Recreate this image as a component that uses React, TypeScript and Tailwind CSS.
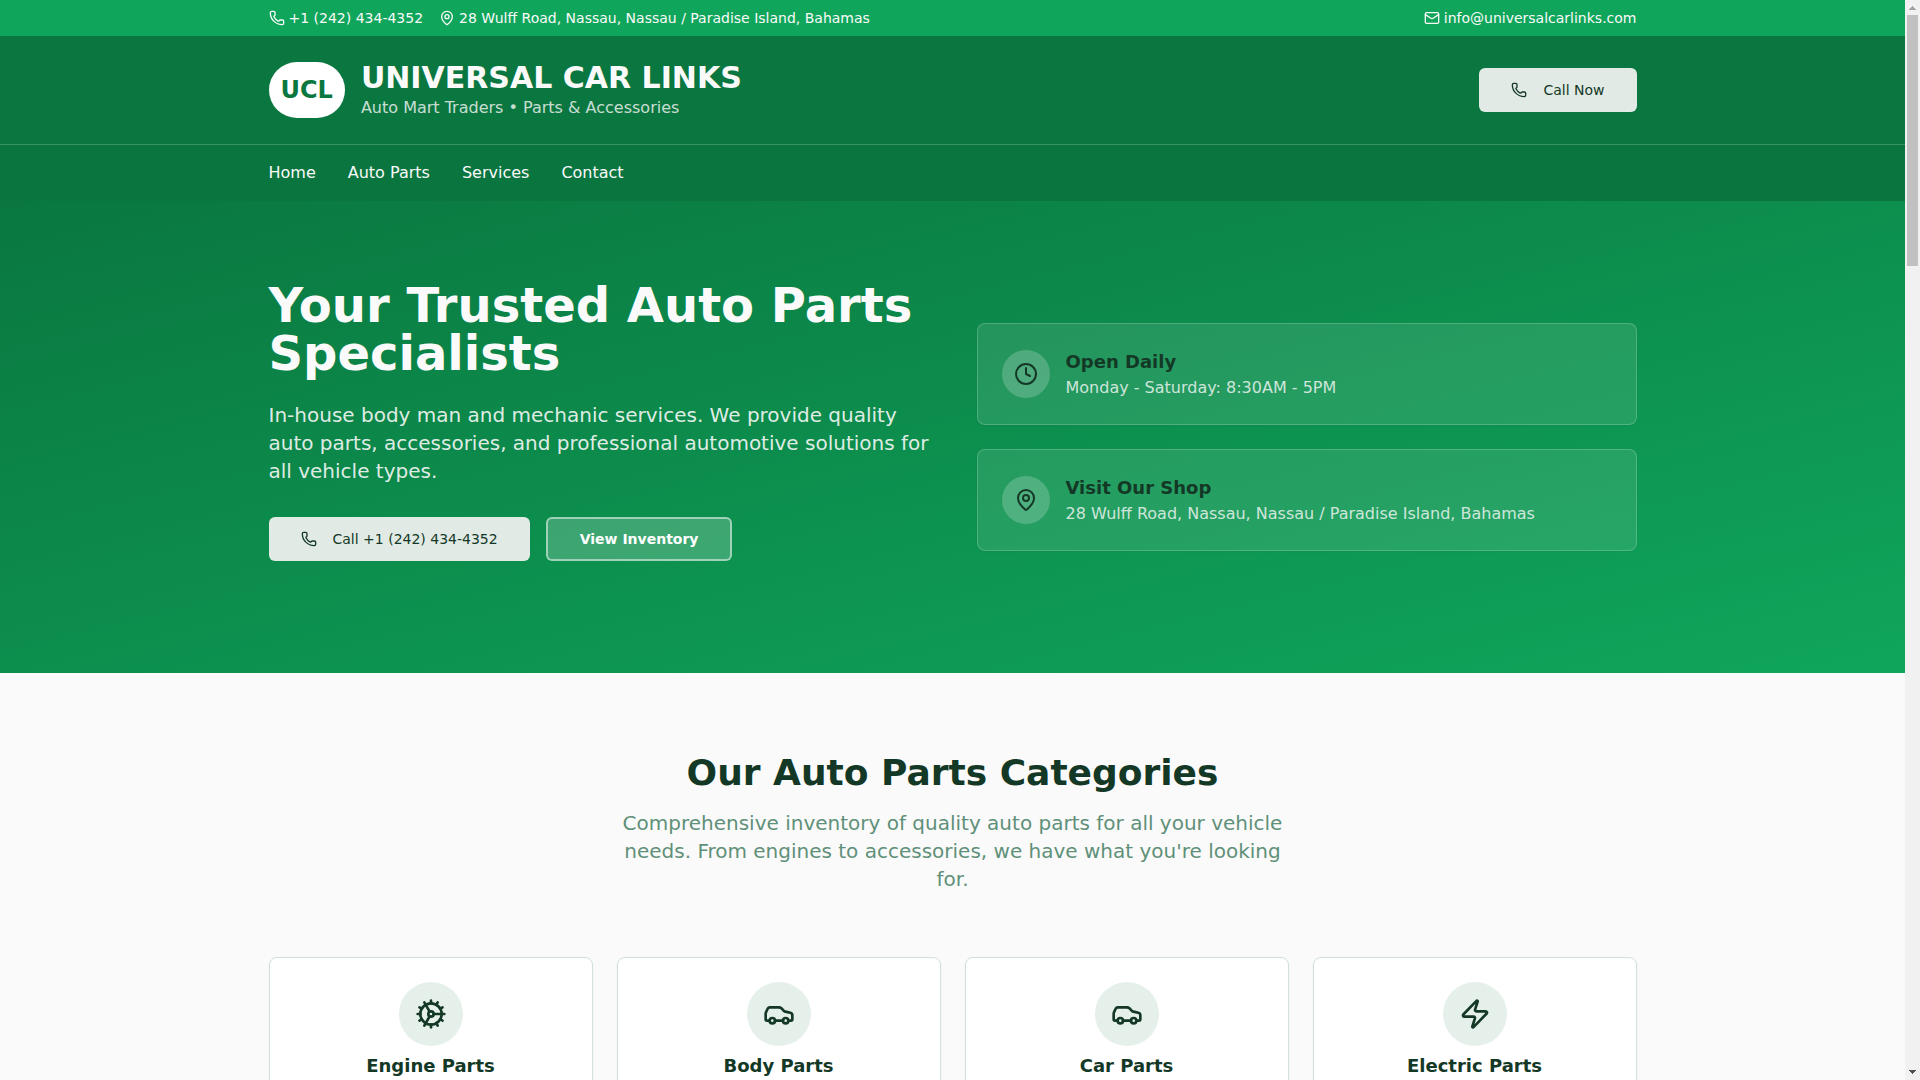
import type { ReactNode } from "react";
import { Car, Clock, Cog, Mail, MapPin, Phone, Zap } from "lucide-react";
import type { LucideIcon } from "lucide-react";

const PHONE = "+1 (242) 434-4352";
const ADDRESS = "28 Wulff Road, Nassau, Nassau / Paradise Island, Bahamas";
const EMAIL = "info@universalcarlinks.com";

const navLinks = ["Home", "Auto Parts", "Services", "Contact"];

const infoCards: { icon: LucideIcon; title: string; text: string }[] = [
  { icon: Clock, title: "Open Daily", text: "Monday - Saturday: 8:30AM - 5PM" },
  { icon: MapPin, title: "Visit Our Shop", text: ADDRESS },
];

const categories: { icon: LucideIcon; title: string }[] = [
  { icon: Cog, title: "Engine Parts" },
  { icon: Car, title: "Body Parts" },
  { icon: Car, title: "Car Parts" },
  { icon: Zap, title: "Electric Parts" },
];

function Container({ children, className = "" }: { children: ReactNode; className?: string }) {
  return <div className={`mx-auto w-full max-w-[1400px] px-4 ${className}`}>{children}</div>;
}

function CallButton({ children }: { children: ReactNode }) {
  return (
    <button
      type="button"
      className="flex h-11 items-center gap-4 rounded-md bg-[#e1eae5] px-8 text-sm font-medium text-[#143826]"
    >
      <Phone className="size-4" />
      {children}
    </button>
  );
}

function Header() {
  return (
    <header className="text-[#fafafa]">
      <div className="bg-[#0fa65b] py-2 text-sm">
        <Container className="flex items-center justify-between">
          <div className="flex items-center gap-4">
            <a href="tel:+12424344352" className="flex items-center gap-1">
              <Phone className="size-4" />
              {PHONE}
            </a>
            <span className="flex items-center gap-1">
              <MapPin className="size-4" />
              {ADDRESS}
            </span>
          </div>
          <a href={`mailto:${EMAIL}`} className="flex items-center gap-1">
            <Mail className="size-4" />
            {EMAIL}
          </a>
        </Container>
      </div>
      <div className="bg-[#0a7740] py-6">
        <Container className="flex items-center justify-between">
          <div className="flex items-center gap-4">
            <div className="rounded-full bg-white p-3 text-2xl font-bold text-[#0a7740]">UCL</div>
            <div>
              <div className="text-3xl font-bold">UNIVERSAL CAR LINKS</div>
              <p className="text-[#fafafa]/80">Auto Mart Traders • Parts &amp; Accessories</p>
            </div>
          </div>
          <CallButton>Call Now</CallButton>
        </Container>
      </div>
      <nav className="border-t border-[#3b9266] bg-[#0a753f] py-4">
        <Container className="flex gap-8">
          {navLinks.map((label) => (
            <a key={label} href="#" className="font-medium">
              {label}
            </a>
          ))}
        </Container>
      </nav>
    </header>
  );
}

function Hero() {
  return (
    <section className="bg-linear-to-br/srgb from-[#0a7740] to-[#0fa65b] py-20 text-[#fafafa]">
      <Container className="grid grid-cols-2 items-center gap-12">
        <div>
          <h1 className="mb-6 text-5xl font-bold">Your Trusted Auto Parts Specialists</h1>
          <p className="mb-8 text-xl text-[#fafafa]/90">
            In-house body man and mechanic services. We provide quality auto parts, accessories, and
            professional automotive solutions for all vehicle types.
          </p>
          <div className="mb-8 flex gap-4">
            <CallButton>Call {PHONE}</CallButton>
            <button
              type="button"
              className="h-11 rounded-md border-2 border-white/50 bg-white/20 px-8 text-sm font-semibold text-white"
            >
              View Inventory
            </button>
          </div>
        </div>
        <div className="flex flex-col gap-6">
          {infoCards.map(({ icon: Icon, title, text }) => (
            <div
              key={title}
              className="flex items-center gap-4 rounded-lg border border-white/20 bg-white/10 p-6 shadow-xs"
            >
              <div className="flex size-12 items-center justify-center rounded-full bg-white/20 text-[#143826]">
                <Icon className="size-6" />
              </div>
              <div>
                <h3 className="text-lg font-semibold text-[#143826]">{title}</h3>
                <p className="text-[#fafafa]/80">{text}</p>
              </div>
            </div>
          ))}
        </div>
      </Container>
    </section>
  );
}

function Categories() {
  return (
    <section className="bg-[#fafafa] py-20">
      <Container>
        <div className="mx-auto mb-16 max-w-2xl text-center">
          <h2 className="mb-4 text-4xl font-bold text-[#143826]">Our Auto Parts Categories</h2>
          <p className="text-xl text-[#5f9079]">
            Comprehensive inventory of quality auto parts for all your vehicle needs. From engines to
            accessories, we have what you're looking for.
          </p>
        </div>
        <div className="grid grid-cols-4 gap-6">
          {categories.map(({ icon: Icon, title }) => (
            <article
              key={title}
              className="flex flex-col items-center rounded-lg border border-[#d0e1d9] bg-white p-6 text-[#143826] shadow-xs"
            >
              <div className="mb-2 flex size-16 items-center justify-center rounded-full bg-[#e6f0eb]">
                <Icon className="size-8" />
              </div>
              <h3 className="text-lg/6 font-semibold">{title}</h3>
            </article>
          ))}
        </div>
      </Container>
    </section>
  );
}

function ScrollTrack() {
  return (
    <div aria-hidden="true" className="flex w-[15px] shrink-0 flex-col items-center bg-[#f1f1f1]">
      <svg className="h-[15px] w-[15px]" viewBox="0 0 15 15" fill="#a3a3a3" shapeRendering="crispEdges">
        <path d="M7 6h1v1h1v1h1v1h1v1H4V9h1V8h1V7h1z" />
      </svg>
      <div className="h-[251px] w-[11px] bg-[#c1c1c1]" />
      <svg className="mt-auto h-[15px] w-[15px]" viewBox="0 0 15 15" fill="#505050" shapeRendering="crispEdges">
        <path d="M4 5h7v1h-1v1H9v1H8v1H7V8H6V7H5V6H4z" />
      </svg>
    </div>
  );
}

export default function App() {
  return (
    <div className="flex h-screen overflow-hidden font-['DejaVu_Sans',sans-serif]">
      <main className="min-w-0 flex-1 overflow-hidden">
        <Header />
        <Hero />
        <Categories />
      </main>
      <ScrollTrack />
    </div>
  );
}
